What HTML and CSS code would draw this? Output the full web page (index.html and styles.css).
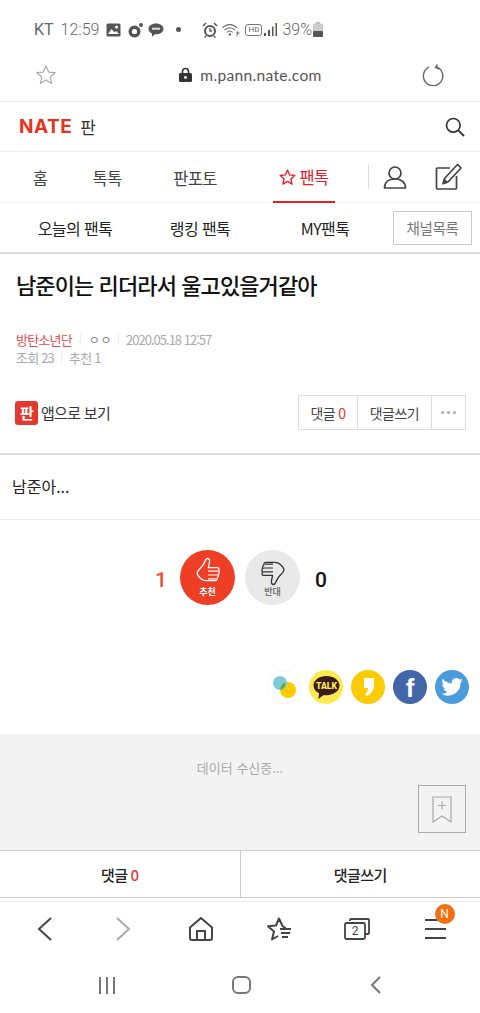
FILE: index.html
```html
<!DOCTYPE html>
<html lang="ko">
<head>
    <meta charset="UTF-8">
    <meta name="viewport" content="width=device-width, initial-scale=1.0">
    <title>남준이는 리더라서 울고있을거같아</title>
    <link rel="stylesheet" href="styles.css">
</head>
<body>
    <div class="status-bar">
        <span class="carrier">KT</span>
        <span class="clock">12:59</span>
        <svg class="st-icon" width="15" height="14" viewBox="0 0 15 14"><rect x="0.5" y="0.5" width="14" height="13" rx="1.5" fill="#555"/><circle cx="10.5" cy="4" r="1.5" fill="#fff"/><path d="M2 11l3.5-5 3 3.5 1.5-1.5 3 3z" fill="#fff"/></svg>
        <svg class="st-icon gap-l" width="16" height="16" viewBox="0 0 16 16"><circle cx="6.5" cy="9.5" r="4.3" fill="none" stroke="#555" stroke-width="3.4"/><circle cx="13" cy="3" r="2" fill="#555"/></svg>
        <svg class="st-icon gap-s" width="16" height="14" viewBox="0 0 16 14"><path d="M8 0.5c4.2 0 7.5 2.4 7.5 5.4s-3.300 5.400-7.500 5.400l-1 0-3 2.500 0-3.200C2 9.600 0.500 8 0.500 5.900 0.500 2.900 3.800 0.500 8 0.500z" fill="#555"/><rect x="4" y="4.700" width="8" height="2" fill="#ddd"/></svg>
        <span class="st-dot"></span>
        <svg class="st-icon alarm" width="16" height="16" viewBox="0 0 16 16"><circle cx="8" cy="9" r="5" fill="#fff" stroke="#555" stroke-width="2"/><path d="M8 6v3h2" fill="none" stroke="#555" stroke-width="1.300"/><path d="M1 4l3-3M15 4l-3-3M4 14l-1.500 1.500M12 14l1.500 1.500" stroke="#555" stroke-width="1.500"/></svg>
        <svg class="st-icon gap-s" width="18" height="14" viewBox="0 0 18 14"><g fill="none" stroke="#666" stroke-width="1.100"><path d="M0.500 5C4.500 0.500 11 0.500 15 5"/><path d="M2.500 7.200C5.500 4 10 4 13 7.200"/><path d="M4.800 9.400C6.500 7.800 9 7.800 10.700 9.400"/></g><circle cx="7.800" cy="11.500" r="1.200" fill="#666"/><path d="M14 10h3.500M15.700 8.300v3.400M14 13l1.500-1" stroke="#666" stroke-width="1"/></svg>
        <span class="hd-badge">HD</span>
        <svg class="st-icon signal" width="14" height="13" viewBox="0 0 14 13"><g fill="#555"><rect x="0" y="10" width="2" height="3"/><rect x="4" y="7" width="2" height="6"/><rect x="8" y="3.500" width="1.500" height="9.500"/><rect x="11.500" y="0" width="1.500" height="13"/></g></svg>
        <span class="battery-pct">39%</span>
        <svg class="st-icon" width="10" height="15" viewBox="0 0 10 15"><rect x="3" y="0" width="4" height="2" fill="#bbb"/><rect x="0" y="1.500" width="10" height="13.500" rx="1" fill="#ccc"/><rect x="0" y="9" width="10" height="6" rx="1" fill="#555"/></svg>
    </div>

    <div class="url-bar">
        <svg class="url-star" width="22" height="22" viewBox="0 0 24 24"><path d="M12 2.200l2.900 6.600 7.100.7-5.400 4.700 1.600 7-6.200-3.700-6.200 3.700 1.600-7L2 9.500l7.100-.7z" fill="none" stroke="#aaa" stroke-width="1.300" stroke-linejoin="round"/></svg>
        <div class="url-text">
            <svg width="13" height="15" viewBox="0 0 13 15"><path d="M3.500 7V4.500a3 3 0 0 1 6 0V7" fill="none" stroke="#333" stroke-width="1.600"/><rect x="0" y="6" width="13" height="9" rx="1.500" fill="#333"/><circle cx="6.500" cy="10.500" r="1.400" fill="#fff"/></svg>
            <span>m.pann.nate.com</span>
        </div>
        <svg class="url-reload" width="22" height="22" viewBox="0 0 22 22"><path d="M7 3.200a9.700 9.700 0 1 0 7.500-.3" fill="none" stroke="#666" stroke-width="1.400"/><path d="M15.500 0.500L13.500 3.200 17 5.200" fill="none" stroke="#666" stroke-width="1.400"/></svg>
    </div>

    <header class="logo-bar">
        <div class="logo"><span class="logo-nate">NATE</span><span class="logo-pan">판</span></div>
        <svg width="20" height="20" viewBox="0 0 20 20"><circle cx="8.300" cy="8.300" r="6.800" fill="none" stroke="#333" stroke-width="1.700"/><path d="M13.300 13.300l5.700 5.700" stroke="#333" stroke-width="1.900"/></svg>
    </header>

    <nav class="main-nav">
        <a class="tab tab-home">홈</a>
        <a class="tab tab-talk">톡톡</a>
        <a class="tab tab-photo">판포토</a>
        <a class="tab tab-fan">
            <svg width="17" height="16" viewBox="0 0 24 23"><path d="M12 1.500l3.100 7 7.400.8-5.600 5 1.600 7.400-6.500-3.800-6.500 3.800 1.600-7.400-5.600-5 7.400-.8z" fill="none" stroke="#e3202c" stroke-width="2" stroke-linejoin="round"/></svg>
            팬톡
        </a>
        <span class="nav-sep"></span>
        <svg class="nav-user" width="24" height="24" viewBox="0 0 24 24"><circle cx="12" cy="8" r="6" fill="none" stroke="#444" stroke-width="1.700"/><path d="M1.500 23c0-6 4.500-9 10.500-9s10.500 3 10.500 9z" fill="none" stroke="#444" stroke-width="1.700" stroke-linejoin="round"/></svg>
        <svg class="nav-edit" width="27" height="27" viewBox="0 0 27 27"><path d="M15 5H2.500a1 1 0 0 0-1 1v19a1 1 0 0 0 1 1h18a1 1 0 0 0 1-1V13" fill="none" stroke="#444" stroke-width="1.700"/><path d="M22.500 1.500l3.500 3.500L13 19l-5 1.800L9.500 15.500z" fill="none" stroke="#444" stroke-width="1.700" stroke-linejoin="round"/><path d="M8 20.800l1.500-5.300 3.500 3.500z" fill="#444"/></svg>
    </nav>

    <nav class="sub-nav">
        <a class="sub-item sub-today">오늘의 팬톡</a>
        <a class="sub-item sub-rank">랭킹 팬톡</a>
        <a class="sub-item sub-my">MY팬톡</a>
        <a class="channel-btn">채널목록</a>
    </nav>

    <section class="post-head">
        <h1>남준이는 리더라서 울고있을거같아</h1>
        <div class="meta">
            <span class="meta-channel">방탄소년단</span>
            <span class="meta-sep"></span>
            <span class="meta-name">ㅇㅇ</span>
            <span class="meta-sep meta-sep-tight"></span>
            <span class="meta-date">2020.05.18 12:57</span>
        </div>
        <div class="meta meta-second">
            <span>조회 23</span>
            <span class="meta-sep"></span>
            <span>추천 1</span>
        </div>
        <div class="action-row">
            <div class="app-link">
                <span class="app-badge">판</span>
                <span>앱으로 보기</span>
            </div>
            <div class="btn-group">
                <a class="group-btn btn-count">댓글 <em>0</em></a>
                <a class="group-btn btn-write">댓글쓰기</a>
                <a class="group-btn btn-more"><i></i><i></i><i></i></a>
            </div>
        </div>
    </section>

    <div class="post-body">남준아...</div>

    <div class="vote">
        <span class="vote-num vote-up-num">1</span>
        <div class="vote-btn vote-up">
            <svg width="30" height="33" viewBox="0 0 30 33"><path d="M14.500 1.500c2 0 2.700 2 2.200 4.500l-1.200 6h10c2.500 0 2.800 3 1.500 4 1.500 1 1 3.500-.5 4 1 1.200.3 3.300-1 3.800.5 1.500-.5 3.200-2.500 3.200H13c-3 0-5-1-6.500-2.500C4 22.500 2.500 21 2.500 18c0-3 4-5 6.500-8.500 2-2.800 3-8 5.500-8z" fill="none" stroke="#fff" stroke-width="1.500" stroke-linejoin="round"/><path d="M15 16h12M15 20.500h11M15 25h9" stroke="#fff" stroke-width="1.300"/></svg>
            <span>추천</span>
        </div>
        <div class="vote-btn vote-down">
            <svg width="30" height="33" viewBox="0 0 30 33"><path d="M15.500 31.500c-2 0-2.700-2-2.200-4.500l1.200-6h-10c-2.500 0-2.800-3-1.500-4-1.500-1-1-3.500.5-4-1-1.200-.3-3.300 1-3.800-.5-1.500.5-3.200 2.500-3.200H17c3 0 5 1 6.500 2.500 2.500 2 4 3.500 4 6.500 0 3-4 5-6.500 8.500-2 2.800-3 8-5.500 8z" fill="none" stroke="#333" stroke-width="1.500" stroke-linejoin="round"/><path d="M15 17H3M15 12.500H4M15 8H6" stroke="#333" stroke-width="1.300"/></svg>
            <span>반대</span>
        </div>
        <span class="vote-num vote-down-num">0</span>
    </div>

    <div class="share">
        <span class="share-icon share-story">
            <svg width="28" height="28" viewBox="0 0 28 28"><circle cx="18" cy="17" r="8" fill="#fdcb00"/><circle cx="10" cy="10" r="7" fill="#7ccbd6"/><path d="M15.500 9.500A8 8 0 0 0 10.300 17 7 7 0 0 0 15.500 9.500z" fill="#6fa63a"/></svg>
        </span>
        <span class="share-icon share-talk">
            <svg width="28" height="26" viewBox="0 0 28 26"><path d="M14 1c7.500 0 13.500 4.400 13.500 10S21.500 21 14 21c-1 0-2-.1-3-.2L5.500 25l.8-6C2.700 17.200.5 14.300.5 11 .5 5.400 6.500 1 14 1z" fill="#3a1d1d"/><text x="14" y="15" class="talk-text" text-anchor="middle">TALK</text></svg>
        </span>
        <span class="share-icon share-comma">
            <svg width="11" height="18" viewBox="0 0 11 18"><path d="M1 0h10v7c0 5-3 9-7 11l-2-2c2-1.500 3-3.500 3-6H1z" fill="#fff"/></svg>
        </span>
        <span class="share-icon share-fb">f</span>
        <span class="share-icon share-tw">
            <svg width="22" height="18" viewBox="0 0 24 20"><path d="M24 2.400c-.9.400-1.800.700-2.800.800 1-.6 1.800-1.600 2.200-2.700-1 .6-2 1-3.100 1.200A4.900 4.900 0 0 0 11.900 6.200C7.800 6 4.200 4 1.700.9c-1.300 2.200-.7 5.100 1.500 6.600-.8 0-1.600-.2-2.200-.6 0 2.300 1.600 4.400 3.900 4.900-.7.200-1.500.2-2.200.1.600 2 2.400 3.400 4.600 3.400A9.900 9.900 0 0 1 0 17.300 13.900 13.900 0 0 0 21.500 5c1-.7 1.800-1.600 2.500-2.600z" fill="#fff"/></svg>
        </span>
    </div>

    <section class="loading-box">
        <p>데이터 수신중...</p>
        <div class="bookmark-row">
            <a class="bookmark-btn">
                <svg width="20" height="27" viewBox="0 0 20 27"><path d="M1 1h18v25l-9-6-9 6z" fill="none" stroke="#aaa" stroke-width="1.200"/><path d="M10 5.500v8M6 9.500h8" stroke="#aaa" stroke-width="1.200"/></svg>
            </a>
        </div>
    </section>

    <div class="comment-bar">
        <a class="comment-cell">댓글 <em>0</em></a>
        <a class="comment-cell">댓글쓰기</a>
    </div>

    <div class="browser-nav">
        <span class="bn-cell"><svg width="16" height="24" viewBox="0 0 16 24"><path d="M14 1L2 12l12 11" fill="none" stroke="#444" stroke-width="2"/></svg></span>
        <span class="bn-cell"><svg width="16" height="24" viewBox="0 0 16 24"><path d="M2 1l12 11L2 23" fill="none" stroke="#aaa" stroke-width="2"/></svg></span>
        <span class="bn-cell"><svg width="24" height="24" viewBox="0 0 24 24"><path d="M1 10.500L12 1l11 9.500V21a2 2 0 0 1-2 2H3a2 2 0 0 1-2-2z" fill="none" stroke="#444" stroke-width="2" stroke-linejoin="round"/><path d="M8 23v-9h8v9" fill="none" stroke="#444" stroke-width="2"/></svg></span>
        <span class="bn-cell"><svg width="25" height="24" viewBox="0 0 25 24"><path d="M19 11l-1-.2L15.500 9 12 1.500 9 8.500l-8 .8 6 5.200L5 22.500l6-3.500" fill="none" stroke="#444" stroke-width="2" stroke-linejoin="round"/><path d="M13 12h11M14 16h9M15 20h6" stroke="#444" stroke-width="1.800"/></svg></span>
        <span class="bn-cell"><span class="tabs-icon"><svg width="26" height="22" viewBox="0 0 26 22"><path d="M6 3V2a1 1 0 0 1 1-1h17a1 1 0 0 1 1 1v13a1 1 0 0 1-1 1h-3" fill="none" stroke="#444" stroke-width="1.800"/><rect x="1" y="5" width="20" height="16" rx="1.500" fill="#fff" stroke="#444" stroke-width="1.800"/></svg><span>2</span></span></span>
        <span class="bn-cell"><span class="menu-icon"><i></i><i></i><i></i><b>N</b></span></span>
    </div>

    <div class="system-nav">
        <svg width="18" height="17" viewBox="0 0 18 17"><path d="M2 0v17M9 0v17M16 0v17" stroke="#777" stroke-width="2"/></svg>
        <svg class="sys-home" width="19" height="18" viewBox="0 0 19 18"><rect x="1" y="1" width="17" height="16" rx="5" fill="none" stroke="#777" stroke-width="2"/></svg>
        <svg width="11" height="18" viewBox="0 0 11 18"><path d="M10 1L2 9l8 8" fill="none" stroke="#777" stroke-width="2"/></svg>
    </div>
</body>
</html>
```

FILE: styles.css
```css
* {
    box-sizing: border-box;
}
html, body {
    margin: 0;
    padding: 0;
}
body {
    width: 480px;
    height: 1013px;
    overflow: hidden;
    background-color: #fff;
    font-family: "Noto Sans CJK KR", "Noto Sans", sans-serif;
    color: #222;
}
a {
    color: inherit;
    text-decoration: none;
}
em {
    font-style: normal;
}

/* status bar */
.status-bar {
    height: 52px;
    padding: 7px 0 0 34px;
    display: flex;
    align-items: center;
    font-family: Roboto, sans-serif;
    color: #666;
}
.carrier {
    font-size: 16px;
    margin-right: 7px;
}
.clock {
    font-size: 16px;
    font-weight: 300;
    margin-right: 7px;
}
.gap-l {
    margin-left: 7px;
}
.gap-s {
    margin-left: 4px;
}
.st-dot {
    width: 5px;
    height: 5px;
    margin-left: 12px;
    border-radius: 50%;
    background-color: #555;
}
.alarm {
    margin-left: 21px;
}
.hd-badge {
    margin-left: 5px;
    padding: 0 2px;
    font-size: 8px;
    line-height: 10px;
    border: 1px solid #777;
    border-radius: 3px;
}
.signal {
    margin-left: 2px;
}
.battery-pct {
    font-size: 16px;
    font-weight: 300;
    margin: 0 1px 0 4px;
}

/* url bar */
.url-bar {
    height: 50px;
    padding: 0 36px 4px 35px;
    display: flex;
    align-items: center;
    justify-content: space-between;
    border-bottom: 1px solid #ececec;
}
.url-text {
    display: flex;
    align-items: center;
    gap: 8px;
    margin-left: 22px;
    font-family: Lato, sans-serif;
    font-size: 15.6px;
    letter-spacing: 0.3px;
    color: #555;
}

/* logo */
.logo-bar {
    height: 50px;
    padding: 0 15px 0 19px;
    display: flex;
    align-items: center;
    justify-content: space-between;
    border-bottom: 1px solid #f0f0f0;
}
.logo {
    display: flex;
    align-items: center;
    gap: 8px;
}
.logo-nate {
    font-family: Inter, sans-serif;
    font-size: 19px;
    font-weight: 700;
    color: #e8321e;
    letter-spacing: 0.5px;
}
.logo-pan {
    font-size: 17px;
    color: #333;
}

/* main nav */
.main-nav {
    height: 51px;
    display: flex;
    align-items: center;
    border-bottom: 1px solid #f2f2f2;
}
.tab {
    height: 51px;
    padding-top: 1px;
    display: flex;
    align-items: center;
    justify-content: center;
    font-size: 16.5px;
    letter-spacing: -0.6px;
    color: #444;
}
.tab-home {
    width: 80px;
}
.tab-talk {
    width: 54px;
}
.tab-photo {
    width: 122px;
}
.tab-fan {
    width: 62px;
    margin-left: 17px;
    gap: 3px;
    color: #e3202c;
    border-bottom: 2px solid #e3202c;
}
.nav-sep {
    width: 1px;
    height: 24px;
    margin-left: 33px;
    background-color: #ddd;
}
.nav-user {
    margin-left: 14px;
}
.nav-edit {
    margin-left: 28px;
    margin-bottom: 2px;
}

/* sub nav */
.sub-nav {
    height: 51px;
    display: flex;
    align-items: center;
    border-bottom: 2px solid #ddd;
}
.sub-item {
    text-align: center;
    font-size: 16px;
    letter-spacing: -0.6px;
    color: #222;
}
.sub-today {
    width: 150px;
}
.sub-rank {
    width: 100px;
}
.sub-my {
    width: 143px;
    padding-left: 7px;
}
.channel-btn {
    width: 79px;
    height: 34px;
    display: flex;
    align-items: center;
    justify-content: center;
    border: 1px solid #ccc;
    font-size: 14.5px;
    letter-spacing: -0.3px;
    color: #777;
}

/* post head */
.post-head {
    height: 201px;
    padding: 13px 14px 0 16px;
    border-bottom: 2px solid #ddd;
}
h1 {
    margin: 0 0 29px;
    font-size: 22px;
    line-height: 34px;
    font-weight: 500;
    letter-spacing: -0.9px;
    color: #111;
}
.meta {
    height: 18px;
    display: flex;
    align-items: center;
    font-size: 13px;
    letter-spacing: -0.8px;
    color: #aaa;
}
.meta-channel {
    color: #e6504f;
}
.meta-name {
    font-size: 12px;
    letter-spacing: 0.6px;
    color: #888;
}
.meta-sep {
    width: 1px;
    height: 12px;
    margin: 0 8px;
    background-color: #eee;
}
.meta-sep-tight {
    margin: 0 7px 0 6px;
}
.meta-date {
    letter-spacing: -1px;
}
.meta-second .meta-sep {
    margin: 0 7px;
}
.action-row {
    margin-top: 29px;
    display: flex;
    align-items: center;
    justify-content: space-between;
}
.app-link {
    display: flex;
    align-items: center;
    gap: 3px;
    margin-left: -1px;
    font-size: 15px;
    letter-spacing: -0.7px;
    color: #333;
}
.app-badge {
    width: 23px;
    height: 24px;
    display: flex;
    align-items: center;
    justify-content: center;
    border-radius: 3px;
    background-color: #e5392f;
    color: #fff;
    font-size: 15px;
    font-weight: 700;
}
.btn-group {
    height: 35px;
    display: flex;
    border: 1px solid #ddd;
}
.group-btn {
    display: flex;
    align-items: center;
    justify-content: center;
    font-size: 14px;
    letter-spacing: -0.5px;
    color: #444;
    border-right: 1px solid #ddd;
}
.group-btn em {
    margin-left: 3px;
    color: #e5392f;
}
.btn-count {
    width: 59px;
}
.btn-write {
    width: 74px;
}
.btn-more {
    width: 33px;
    gap: 3px;
    border-right: none;
}
.btn-more i {
    width: 3px;
    height: 3px;
    border-radius: 50%;
    background-color: #aaa;
}

/* body */
.post-body {
    height: 65px;
    padding: 0 0 2px 12px;
    display: flex;
    align-items: center;
    border-bottom: 1px solid #eee;
    font-size: 16px;
    letter-spacing: 0;
    color: #222;
}

/* vote */
.vote {
    height: 150px;
    padding: 30px 0 0 155px;
    display: flex;
    align-items: flex-start;
}
.vote-num {
    width: 11px;
    margin-top: 16px;
    font-family: Roboto, sans-serif;
    font-size: 21px;
    font-weight: 500;
    line-height: 28px;
}
.vote-up-num {
    color: #e8503a;
    margin-right: 14px;
}
.vote-down-num {
    color: #111;
    margin-left: 15px;
}
.vote-btn {
    width: 55px;
    height: 55px;
    padding-top: 7px;
    border-radius: 50%;
    display: flex;
    flex-direction: column;
    align-items: center;
    font-size: 9px;
    line-height: 12px;
    font-weight: 700;
}
.vote-btn svg {
    width: 26px;
    height: 29px;
}
.vote-up {
    background-color: #ee3f26;
    color: #fff;
}
.vote-down {
    margin-left: 10px;
    background-color: #e9e9e9;
    color: #777;
}

/* share */
.share {
    height: 64px;
    padding-right: 11px;
    display: flex;
    justify-content: flex-end;
    align-items: flex-start;
    gap: 8px;
}
.share-icon {
    width: 34px;
    height: 34px;
    border-radius: 50%;
    display: flex;
    align-items: center;
    justify-content: center;
}
.share-story {
    border: 1px solid #f4f4f4;
}
.share-talk {
    background-color: #fee94e;
}
.share-talk svg {
    width: 27px;
    height: 25px;
}
.talk-text {
    font-family: Roboto, sans-serif;
    font-size: 9px;
    font-weight: 900;
    fill: #fee94e;
}
.share-comma {
    background-color: #fdcb00;
}
.share-fb {
    background-color: #4267a8;
    color: #fff;
    font-family: "Liberation Sans", sans-serif;
    font-size: 26px;
    font-weight: 700;
    padding-top: 3px;
}
.share-tw {
    background-color: #4a9bdc;
}

/* loading */
.loading-box {
    height: 116px;
    padding-top: 25px;
    background-color: #f3f3f3;
}
.loading-box p {
    margin: 0;
    height: 18px;
    text-align: center;
    font-size: 13px;
    line-height: 18px;
    color: #aaa;
}
.bookmark-row {
    margin-top: 8px;
    padding-right: 14px;
    display: flex;
    justify-content: flex-end;
}
.bookmark-btn {
    width: 48px;
    height: 48px;
    display: flex;
    align-items: center;
    justify-content: center;
    border: 1px solid #aaa;
}

/* comment bar */
.comment-bar {
    height: 48px;
    display: flex;
    border-top: 1px solid #ccc;
    border-bottom: 1px solid #ccc;
}
.comment-cell {
    flex: 1;
    display: flex;
    align-items: center;
    justify-content: center;
    font-size: 15px;
    font-weight: 500;
    letter-spacing: -0.6px;
    color: #222;
}
.comment-cell:first-child {
    border-right: 1px solid #ccc;
}
.comment-cell em {
    margin-left: 3px;
    font-size: 15px;
    color: #e5392f;
}

/* browser nav */
.browser-nav {
    height: 61px;
    margin-top: 3px;
    padding: 0 6px;
    display: flex;
    align-items: flex-start;
    border-top: 1px solid #ececec;
}
.bn-cell {
    width: 78px;
    height: 53px;
    display: flex;
    align-items: center;
    justify-content: center;
}
.tabs-icon {
    position: relative;
    display: flex;
}
.tabs-icon span {
    position: absolute;
    left: 1px;
    width: 20px;
    top: 5px;
    text-align: center;
    font-family: Roboto, sans-serif;
    font-size: 12px;
    line-height: 16px;
    color: #444;
}
.menu-icon {
    position: relative;
    width: 21px;
    height: 20px;
    display: flex;
    flex-direction: column;
    justify-content: space-between;
}
.menu-icon i {
    height: 2px;
    background-color: #444;
}
.menu-icon b {
    position: absolute;
    left: 10px;
    top: -15px;
    width: 20px;
    height: 20px;
    border-radius: 50%;
    background-color: #f26f12;
    color: #fff;
    text-align: center;
    font-family: Roboto, sans-serif;
    font-size: 12px;
    font-weight: 400;
    line-height: 20px;
}

/* system nav */
.system-nav {
    height: 53px;
    padding: 0 99px 7px 98px;
    display: flex;
    align-items: center;
    justify-content: space-between;
}
.sys-home {
    margin-right: 4px;
}
```
